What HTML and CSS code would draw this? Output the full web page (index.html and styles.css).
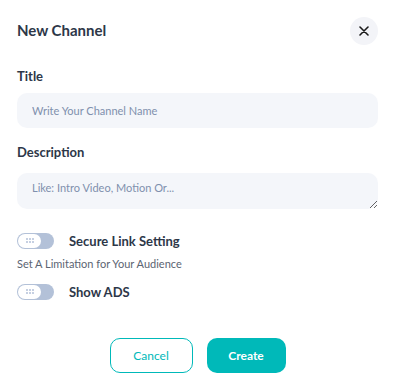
FILE: index.html
```html
<!DOCTYPE html>
<html lang="en">
<head>
    <meta charset="UTF-8">
    <meta name="viewport" content="width=device-width, initial-scale=1.0">
    <title>New Channel</title>
    <link rel="stylesheet" href="styles.css">
</head>
<body>
    <div class="modal">
        <div class="modal-header">
            <h2 class="modal-title">New Channel</h2>
            <button type="button" class="close-btn" aria-label="Close">
                <svg width="10" height="10" viewBox="0 0 10 10">
                    <path d="M1 1L9 9M9 1L1 9" stroke="#1a1a1a" stroke-width="1.6" stroke-linecap="round"/>
                </svg>
            </button>
        </div>

        <form class="channel-form">
            <label class="field-label" for="title">Title</label>
            <input type="text" id="title" class="field-input" placeholder="Write Your Channel Name">

            <label class="field-label label-desc" for="description">Description</label>
            <textarea id="description" class="field-input field-area" placeholder="Like: Intro Video, Motion Or..."></textarea>

            <div class="switch-row first-switch">
                <span class="switch"><span class="knob"><i></i><i></i><i></i><i></i><i></i><i></i></span></span>
                <span class="switch-label">Secure Link Setting</span>
            </div>
            <div class="switch-hint">Set A Limitation for Your Audience</div>
            <div class="switch-row">
                <span class="switch"><span class="knob"><i></i><i></i><i></i><i></i><i></i><i></i></span></span>
                <span class="switch-label">Show ADS</span>
            </div>

            <div class="actions">
                <button type="button" class="btn btn-outline">Cancel</button>
                <button type="submit" class="btn btn-primary">Create</button>
            </div>
        </form>
    </div>
</body>
</html>
```

FILE: styles.css
```css
* {
    margin: 0;
    padding: 0;
    box-sizing: border-box;
}

body {
    font-family: 'Lato', 'Open Sans', sans-serif;
    background: #ffffff;
    color: #2d3748;
}

.modal {
    padding: 17px 18px 0 17px;
}

/* Header */
.modal-header {
    display: flex;
    align-items: center;
    justify-content: space-between;
    height: 28px;
}

.modal-title {
    font-size: 15px;
    font-weight: 700;
    color: #2d3748;
    margin-top: -2px;
}

.close-btn {
    width: 28px;
    height: 28px;
    border: none;
    border-radius: 50%;
    background: #f3f4f8;
    display: flex;
    align-items: center;
    justify-content: center;
    cursor: pointer;
}

/* Form */
.channel-form {
    display: flex;
    flex-direction: column;
}

.field-label {
    font-size: 13px;
    font-weight: 700;
    line-height: 16px;
    color: #2d3748;
    margin-top: 23px;
    margin-bottom: 9px;
}

.label-desc {
    margin-top: 16px;
    margin-bottom: 13px;
}

.field-input {
    width: 100%;
    height: 35px;
    border: none;
    border-radius: 10px;
    background: #f4f6fa;
    padding: 0 15px;
    font-family: 'Lato', sans-serif;
    font-size: 11px;
    color: #2d3748;
    outline: none;
}

.field-input::placeholder {
    color: #7f90ad;
}

.field-area {
    height: 36px;
    padding: 8px 15px;
    line-height: 13px;
    resize: vertical;
}

/* Switches */
.switch-row {
    display: flex;
    align-items: center;
    gap: 15px;
    height: 17px;
}

.first-switch {
    margin-top: 23px;
}

.switch {
    width: 37px;
    height: 16px;
    border-radius: 8px;
    background: #b3c1d8;
    position: relative;
    flex-shrink: 0;
}

.knob {
    position: absolute;
    top: 1px;
    left: 1px;
    width: 23px;
    height: 14px;
    border-radius: 7px;
    background: #ffffff;
    display: grid;
    grid-template-columns: repeat(3, 2px);
    grid-auto-rows: 2px;
    gap: 1px;
    align-content: center;
    justify-content: center;
}

.knob i {
    background: #b3c1d8;
    border-radius: 50%;
}

.switch-label {
    font-size: 13px;
    font-weight: 700;
    color: #2d3748;
}

.switch-hint {
    font-size: 11px;
    color: #5b6472;
    margin-top: 8px;
    margin-bottom: 12px;
    line-height: 14px;
}

/* Buttons */
.actions {
    display: flex;
    justify-content: center;
    gap: 14px;
    margin-top: 38px;
}

.btn {
    height: 35px;
    border-radius: 10px;
    font-family: 'Lato', sans-serif;
    font-size: 12px;
    cursor: pointer;
}

.btn-outline {
    width: 83px;
    background: #ffffff;
    border: 1px solid #00b9b9;
    color: #00b9b9;
}

.btn-primary {
    width: 79px;
    background: #00b9b9;
    border: none;
    color: #ffffff;
    font-weight: 700;
}
```
